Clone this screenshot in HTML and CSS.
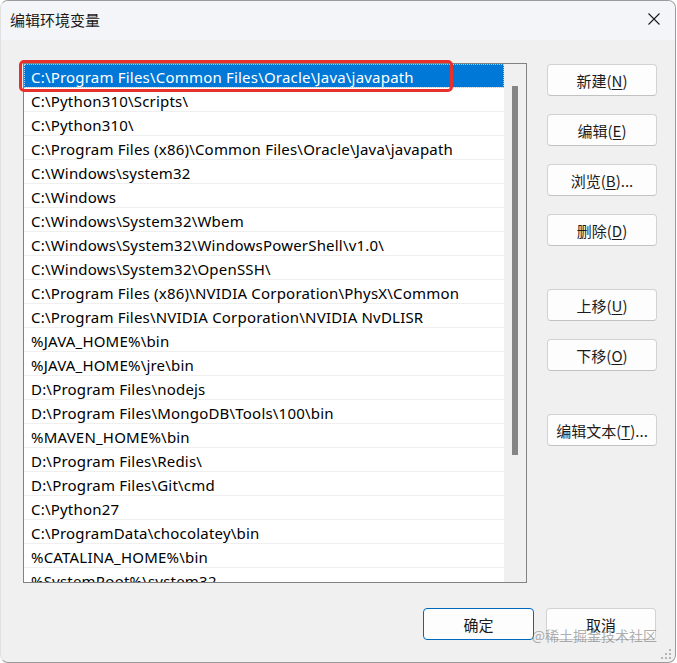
FILE: index.html
```html
<!DOCTYPE html>
<html lang="zh-CN">
<head>
  <meta charset="UTF-8">
  <meta name="viewport" content="width=device-width, initial-scale=1.0">
  <title>编辑环境变量</title>
  <link rel="stylesheet" href="styles.css">
</head>
<body>
  <div class="dialog">
    <div class="titlebar">
      <span class="title">编辑环境变量</span>
      <svg class="close" width="12" height="12" viewBox="0 0 12 12">
        <path d="M0.5 0.5 L11.5 11.5 M11.5 0.5 L0.5 11.5" stroke="#1a1a1a" stroke-width="1.1" fill="none"/>
      </svg>
    </div>

    <div class="content">
      <div class="list-wrap">
        <div class="listbox">
          <ul class="rows">
            <li class="row selected">C:\Program Files\Common Files\Oracle\Java\javapath</li>
            <li class="row">C:\Python310\Scripts\</li>
            <li class="row">C:\Python310\</li>
            <li class="row">C:\Program Files (x86)\Common Files\Oracle\Java\javapath</li>
            <li class="row">C:\Windows\system32</li>
            <li class="row">C:\Windows</li>
            <li class="row">C:\Windows\System32\Wbem</li>
            <li class="row">C:\Windows\System32\WindowsPowerShell\v1.0\</li>
            <li class="row">C:\Windows\System32\OpenSSH\</li>
            <li class="row">C:\Program Files (x86)\NVIDIA Corporation\PhysX\Common</li>
            <li class="row">C:\Program Files\NVIDIA Corporation\NVIDIA NvDLISR</li>
            <li class="row">%JAVA_HOME%\bin</li>
            <li class="row">%JAVA_HOME%\jre\bin</li>
            <li class="row">D:\Program Files\nodejs</li>
            <li class="row">D:\Program Files\MongoDB\Tools\100\bin</li>
            <li class="row">%MAVEN_HOME%\bin</li>
            <li class="row">D:\Program Files\Redis\</li>
            <li class="row">D:\Program Files\Git\cmd</li>
            <li class="row">C:\Python27</li>
            <li class="row">C:\ProgramData\chocolatey\bin</li>
            <li class="row">%CATALINA_HOME%\bin</li>
            <li class="row">%SystemRoot%\system32</li>
          </ul>
          <div class="scrollbar">
            <div class="thumb"></div>
          </div>
        </div>
        <!-- red annotation box around the first entry -->
        <div class="highlight"></div>
      </div>

      <div class="side-buttons">
        <button class="btn">新建(<u>N</u>)</button>
        <button class="btn">编辑(<u>E</u>)</button>
        <button class="btn">浏览(<u>B</u>)...</button>
        <button class="btn">删除(<u>D</u>)</button>
        <button class="btn group-start">上移(<u>U</u>)</button>
        <button class="btn">下移(<u>O</u>)</button>
        <button class="btn group-start">编辑文本(<u>T</u>)...</button>
      </div>
    </div>

    <div class="footer">
      <button class="btn primary">确定</button>
      <button class="btn">取消</button>
    </div>

    <span class="watermark">@稀土掘金技术社区</span>
    <svg class="grip" width="10" height="10" viewBox="0 0 10 10">
      <rect x="8" y="0" width="2" height="2" fill="#b5b5b5"/>
      <rect x="4" y="4" width="2" height="2" fill="#b5b5b5"/>
      <rect x="8" y="4" width="2" height="2" fill="#b5b5b5"/>
      <rect x="0" y="8" width="2" height="2" fill="#b5b5b5"/>
      <rect x="4" y="8" width="2" height="2" fill="#b5b5b5"/>
      <rect x="8" y="8" width="2" height="2" fill="#b5b5b5"/>
    </svg>
  </div>
</body>
</html>
```

FILE: styles.css
```css
* {
  box-sizing: border-box;
}

body {
  margin: 0;
  background-color: #ffffff;
  font-family: "Noto Sans", "Noto Sans CJK SC", sans-serif;
  font-size: 15px;
  color: #000000;
}

.dialog {
  position: relative;
  width: 676px;
  height: 663px;
  background-color: #f0f0f0;
  border: 1px solid #9a9a9a;
  border-left-color: #e0e0e0;
  border-radius: 8px;
  overflow: hidden;
}

.titlebar {
  height: 39px;
  display: flex;
  align-items: center;
  justify-content: space-between;
  padding: 0 15px 3px 9px;
  background-color: #f3f5f8;
}

.title {
  font-family: "Noto Sans CJK SC", sans-serif;
  font-size: 15px;
  color: #1a1a1a;
}

.content {
  display: flex;
  align-items: flex-start;
  gap: 20px;
  padding: 23px 0 0 22px;
}

.list-wrap {
  position: relative;
}

.listbox {
  display: flex;
  width: 504px;
  height: 520px;
  background-color: #ffffff;
  border: 1px solid #828282;
  overflow: hidden;
}

.rows {
  list-style: none;
  margin: 0;
  padding: 0;
  width: 480px;
  flex-shrink: 0;
}

.row {
  height: 24px;
  line-height: 22px;
  padding: 2px 0 0 7px;
  letter-spacing: 0.2px;
  border-bottom: 1px solid #efefef;
  white-space: nowrap;
  overflow: hidden;
}

.row.selected {
  background-color: #0078d7;
  color: #ffffff;
  outline: 1px dotted #a9d0f5;
  outline-offset: -1px;
}

.scrollbar {
  flex: 1;
  background-color: #f0f0f0;
  padding: 22px 0 0 8px;
}

.thumb {
  width: 6px;
  height: 369px;
  background-color: #858585;
}

.highlight {
  position: absolute;
  left: -4px;
  top: -3px;
  width: 434px;
  height: 32px;
  border: 3px solid #e8302c;
  border-radius: 5px;
}

.side-buttons {
  display: flex;
  flex-direction: column;
  gap: 18px;
  padding-top: 1px;
}

.btn {
  width: 110px;
  height: 32px;
  padding: 0;
  font-family: "Noto Sans CJK SC", sans-serif;
  font-size: 15px;
  color: #1b1b1b;
  background-color: #fdfdfd;
  border: 1px solid #d2d2d2;
  border-bottom-color: #c2c2c2;
  border-radius: 4px;
}

.btn u {
  text-underline-offset: 2px;
}

.side-buttons .group-start {
  margin-top: 25px;
}

.footer {
  display: flex;
  justify-content: flex-end;
  gap: 12px;
  padding: 25px 19px 0 0;
}

.btn.primary {
  width: 111px;
  border: 1px solid #0067c0;
}

.watermark {
  position: absolute;
  right: 18px;
  bottom: 17px;
  font-family: "Noto Sans CJK SC", sans-serif;
  font-size: 14px;
  color: rgba(120, 120, 120, 0.6);
}

.grip {
  position: absolute;
  right: 4px;
  bottom: 3px;
}
```
